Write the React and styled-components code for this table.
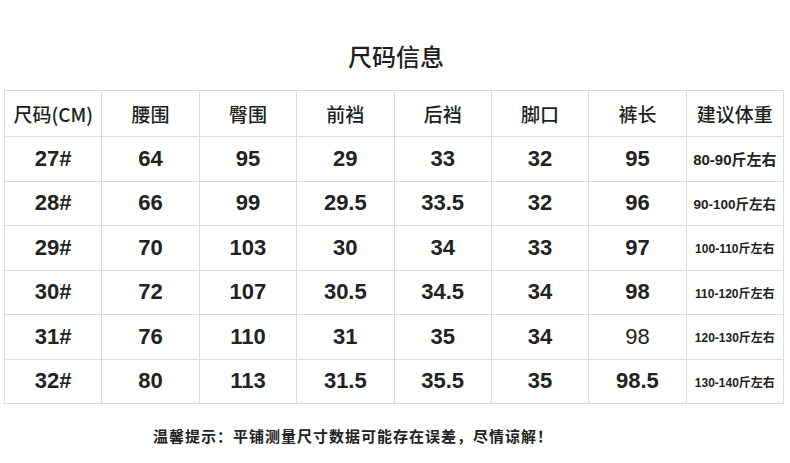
import styled, { createGlobalStyle } from "styled-components";

const GlobalStyle = createGlobalStyle`
  html, body {
    margin: 0;
    padding: 0;
    background: #fff;
  }
  body {
    font-family: "Liberation Sans", "Noto Sans CJK SC", sans-serif;
    color: #222;
  }
`;

const Page = styled.div`
  width: 790px;
  height: 463px;
  padding: 0 0 0 4px;
  box-sizing: border-box;
`;

const Title = styled.h1`
  margin: 0;
  height: 90px;
  padding-top: 40px;
  box-sizing: border-box;
  text-align: center;
  font-family: "Noto Sans CJK SC", sans-serif;
  font-size: 24px;
  font-weight: 500;
  line-height: 32px;
  color: #1e1e1e;
  padding-right: 2px;
`;

const Table = styled.table`
  width: 780px;
  border-collapse: collapse;
  table-layout: fixed;
`;

const HeadCell = styled.th`
  height: 45px;
  padding: 0;
  border: 1px solid #dcdcdc;
  text-align: center;
  font-family: "Noto Sans CJK SC", sans-serif;
  font-size: 19px;
  font-weight: 500;
  color: #1e1e1e;
  white-space: nowrap;
`;

const Cell = styled.td`
  height: 43.5px;
  padding: 0;
  border: 1px solid #dcdcdc;
  text-align: center;
  font-family: "Liberation Sans", "Noto Sans CJK SC", sans-serif;
  font-size: ${({ size }) => size || 22}px;
  font-weight: ${({ light }) => (light ? 400 : 700)};
  color: #222;
  white-space: nowrap;
`;

const Note = styled.p`
  margin: 0;
  padding: 21px 0 0 149px;
  font-family: "Noto Sans CJK SC", sans-serif;
  font-size: 15px;
  letter-spacing: 1px;
  font-weight: 700;
  color: #222;
`;

const headers = ["尺码(CM)", "腰围", "臀围", "前裆", "后裆", "脚口", "裤长", "建议体重"];

const rows = [
  { cells: ["27#", "64", "95", "29", "33", "32", "95"], weight: "80-90斤左右", size: 15 },
  { cells: ["28#", "66", "99", "29.5", "33.5", "32", "96"], weight: "90-100斤左右", size: 13.5 },
  { cells: ["29#", "70", "103", "30", "34", "33", "97"], weight: "100-110斤左右", size: 12 },
  { cells: ["30#", "72", "107", "30.5", "34.5", "34", "98"], weight: "110-120斤左右", size: 12 },
  { cells: ["31#", "76", "110", "31", "35", "34", "98"], weight: "120-130斤左右", size: 12, lightIdx: 6 },
  { cells: ["32#", "80", "113", "31.5", "35.5", "35", "98.5"], weight: "130-140斤左右", size: 12 },
];

export default function App() {
  return (
    <Page>
      <GlobalStyle />
      <Title>尺码信息</Title>
      <Table>
        <thead>
          <tr>
            {headers.map((h) => (
              <HeadCell key={h}>{h}</HeadCell>
            ))}
          </tr>
        </thead>
        <tbody>
          {rows.map((r) => (
            <tr key={r.cells[0]}>
              {r.cells.map((c, i) => (
                <Cell key={i} light={r.lightIdx === i}>
                  {c}
                </Cell>
              ))}
              <Cell size={r.size}>{r.weight}</Cell>
            </tr>
          ))}
        </tbody>
      </Table>
      <Note>温馨提示：平铺测量尺寸数据可能存在误差，尽情谅解！</Note>
    </Page>
  );
}
